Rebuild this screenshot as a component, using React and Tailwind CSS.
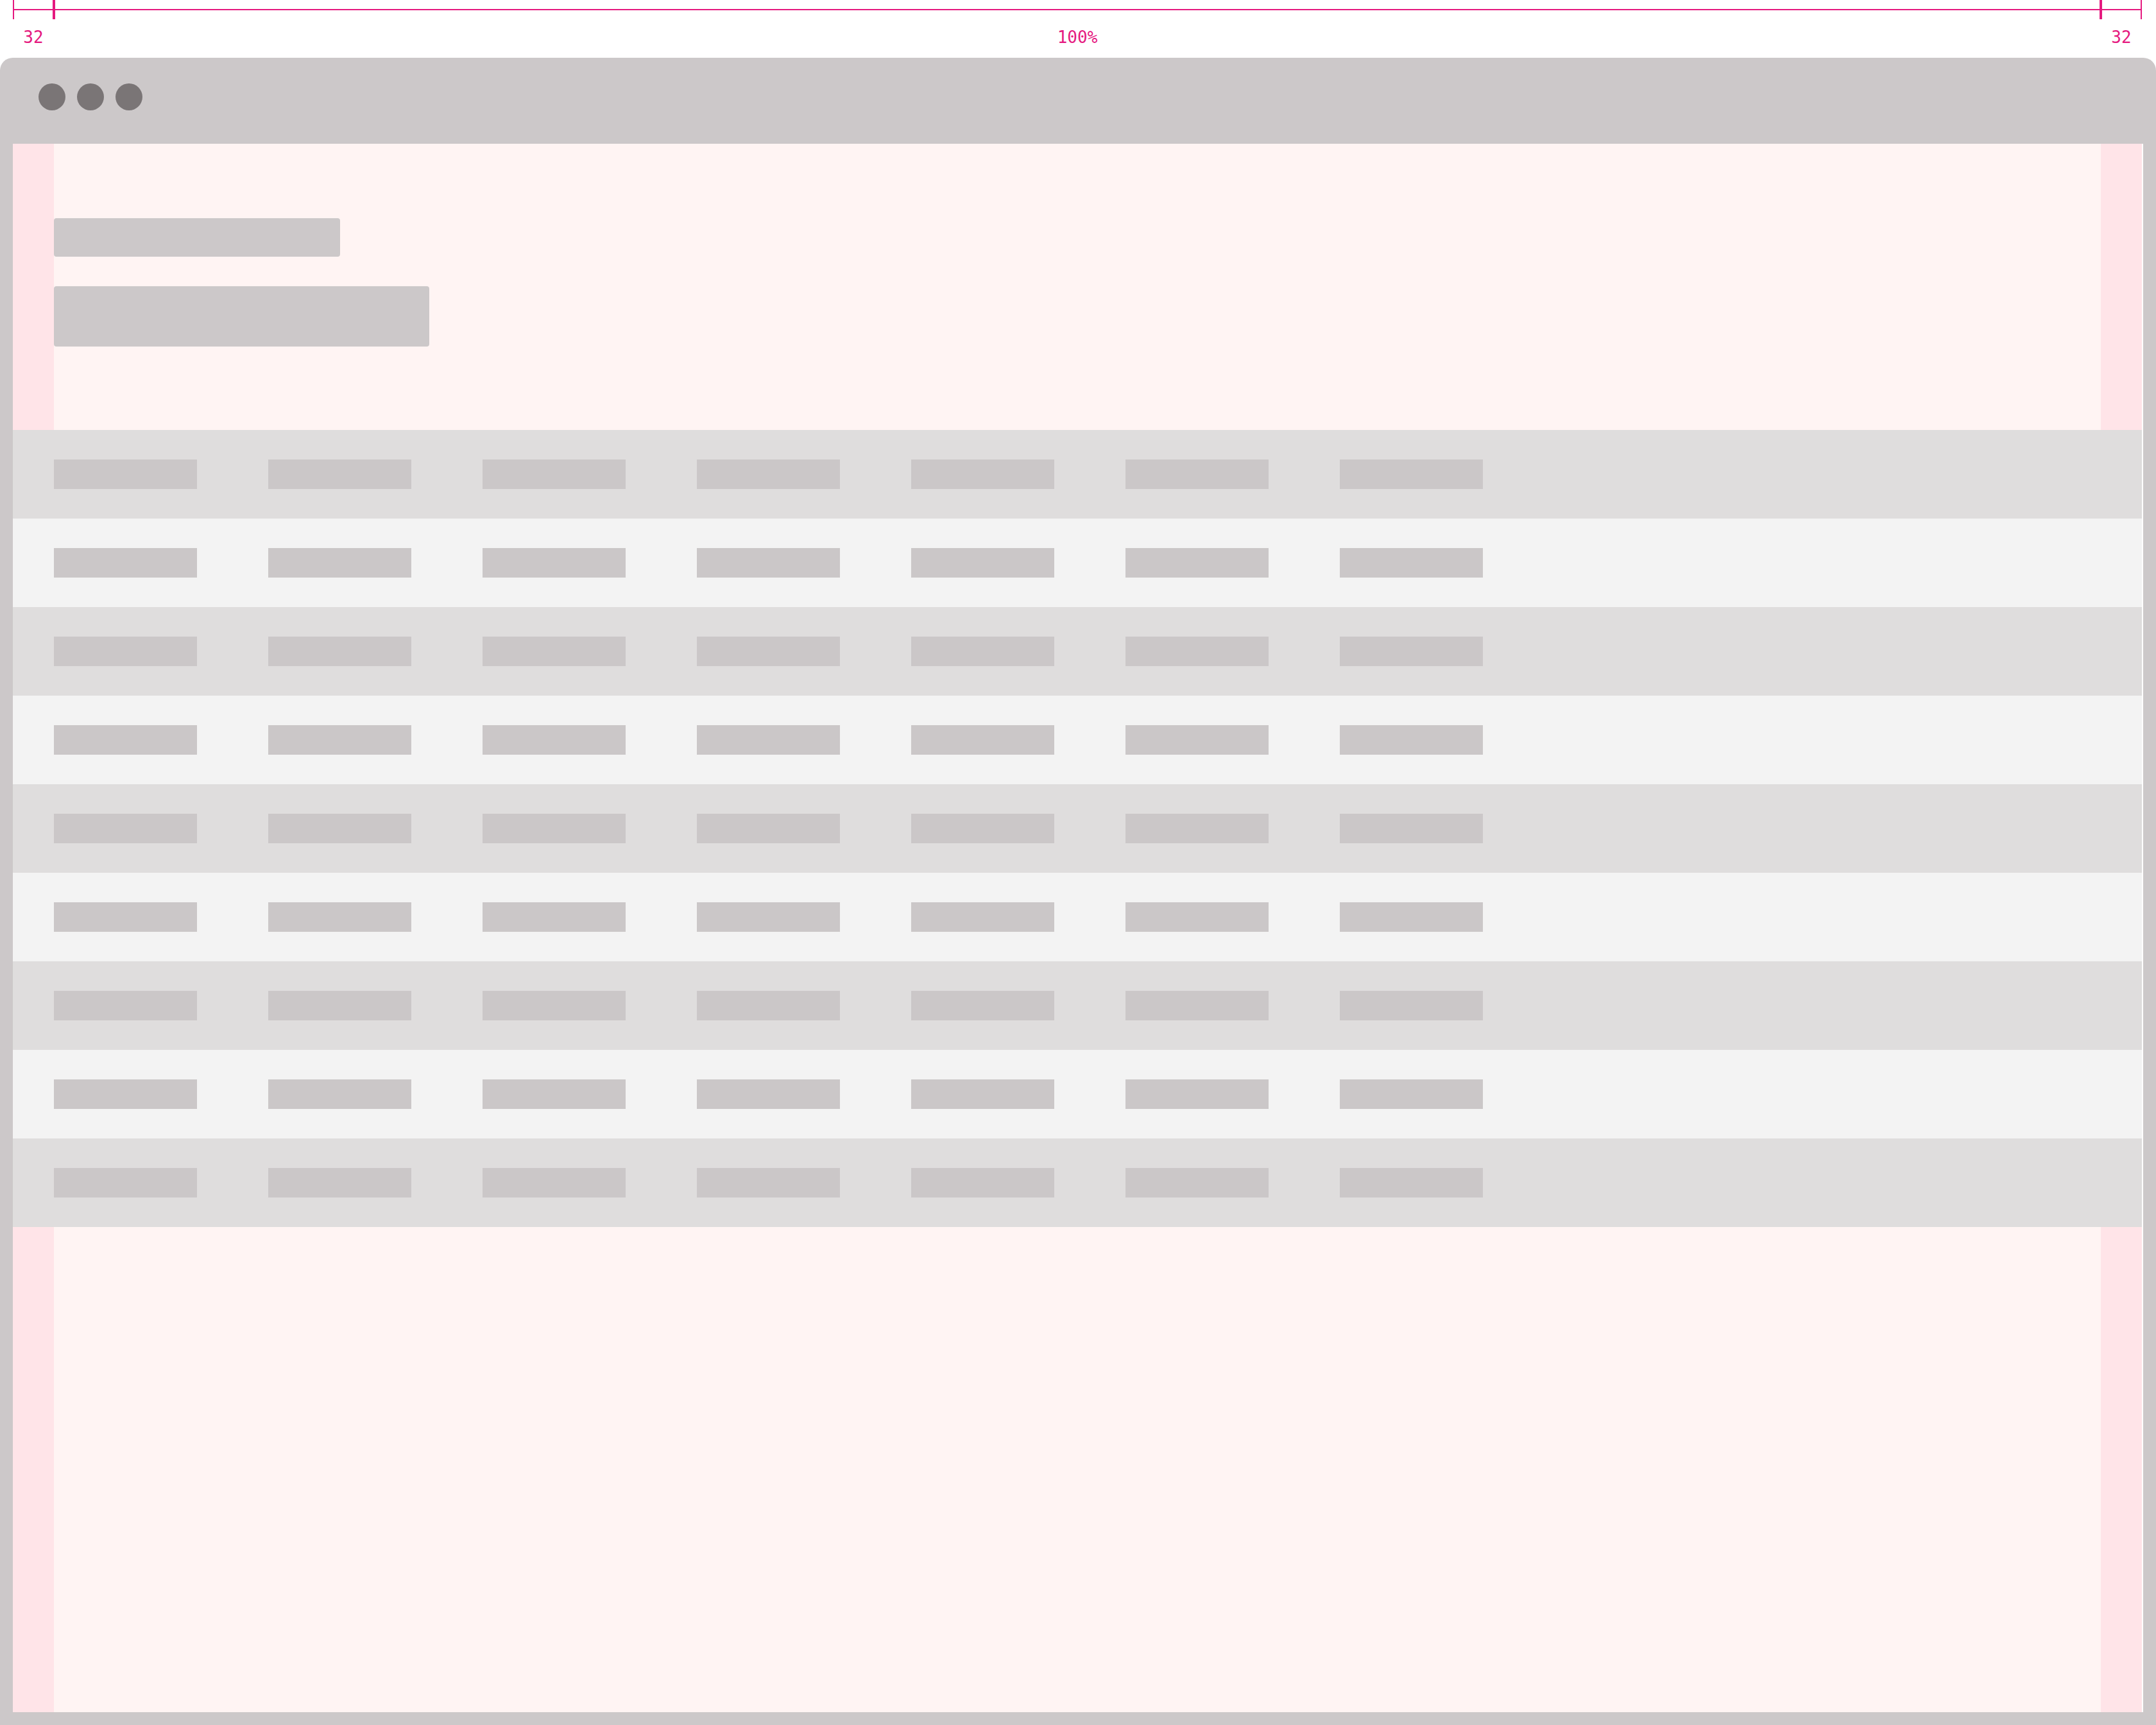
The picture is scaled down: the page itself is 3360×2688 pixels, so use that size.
import React from "react";

const ROWS = 9;
const COLS = 7;

function Ruler() {
  return (
    <div className="ml-[20px] w-[3318px]">
      <div className="flex h-[30px]">
        <div className="w-[2px] bg-[#e5197f]" />
        <div className="flex w-[60px] items-center">
          <div className="h-[2px] w-full bg-[#e5197f]" />
        </div>
        <div className="w-[4px] bg-[#e5197f]" />
        <div className="flex flex-1 items-center">
          <div className="h-[2px] w-full bg-[#e5197f]" />
        </div>
        <div className="w-[4px] bg-[#e5197f]" />
        <div className="flex w-[60px] items-center">
          <div className="h-[2px] w-full bg-[#e5197f]" />
        </div>
        <div className="w-[2px] bg-[#e5197f]" />
      </div>
      <div className="mt-[12px] flex h-[32px] text-[26px] leading-[32px] text-[#e5197f] [font-family:'DejaVu_Sans_Mono',monospace]">
        <div className="w-[64px] text-center">32</div>
        <div className="flex-1 text-center">100%</div>
        <div className="w-[64px] text-center">32</div>
      </div>
    </div>
  );
}

function Gutters({ height, children }) {
  return (
    <div className={`flex ${height}`}>
      <div className="w-[64px] bg-[#ffe4e8]" />
      <div className="flex-1 bg-[#fff4f3]">{children}</div>
      <div className="w-[64px] bg-[#ffe4e8]" />
    </div>
  );
}

function TableRow({ index }) {
  const dark = index % 2 === 0;
  return (
    <div
      className={`flex h-[138px] items-center gap-[111px] pl-[64px] ${
        dark ? "bg-[#dfdddd]" : "bg-[#f3f3f3]"
      }`}
    >
      {Array.from({ length: COLS }).map((_, i) => (
        <div key={i} className="h-[46px] w-[223px] bg-[#cbc7c8]" />
      ))}
    </div>
  );
}

export default function App() {
  return (
    <div className="h-[2688px] w-[3360px] overflow-hidden bg-white">
      <Ruler />
      <div className="mt-[16px] flex h-[2598px] flex-col rounded-t-[20px] bg-[#ccc8c9]">
        <div className="flex h-[134px] gap-[18px] pl-[60px] pt-[40px]">
          <div className="h-[42px] w-[42px] rounded-full bg-[#7a7576]" />
          <div className="h-[42px] w-[42px] rounded-full bg-[#7a7576]" />
          <div className="h-[42px] w-[42px] rounded-full bg-[#7a7576]" />
        </div>
        <div className="mx-[20px] flex-1 bg-white">
          <div className="w-[3318px]">
            <Gutters height="h-[446px]">
              <div className="pt-[116px]">
                <div className="h-[60px] w-[446px] rounded-[4px] bg-[#ccc8c9]" />
                <div className="mt-[46px] h-[94px] w-[585px] rounded-[4px] bg-[#ccc8c9]" />
              </div>
            </Gutters>
            {Array.from({ length: ROWS }).map((_, i) => (
              <TableRow key={i} index={i} />
            ))}
            <Gutters height="h-[756px]" />
          </div>
        </div>
        <div className="h-[20px]" />
      </div>
    </div>
  );
}
